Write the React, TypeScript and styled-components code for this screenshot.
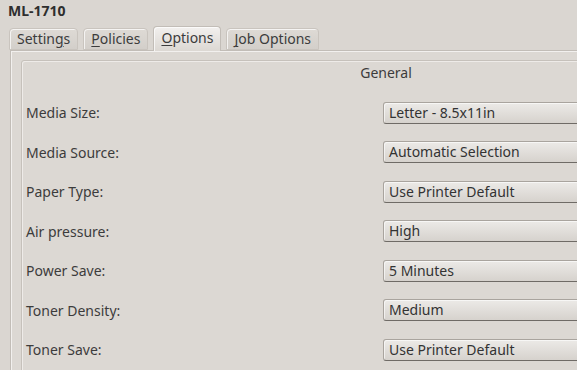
import styled, { createGlobalStyle } from "styled-components";

const GlobalStyle = createGlobalStyle`
  html, body {
    margin: 0;
    padding: 0;
    background: #dad6d1;
    overflow: hidden;
  }
  body {
    font-family: "Noto Sans", "DejaVu Sans", sans-serif;
    font-size: 14px;
    color: #3c3c3c;
  }
`;

const options = [
  { label: "Media Size:", value: "Letter - 8.5x11in" },
  { label: "Media Source:", value: "Automatic Selection" },
  { label: "Paper Type:", value: "Use Printer Default" },
  { label: "Air pressure:", value: "High" },
  { label: "Power Save:", value: "5 Minutes" },
  { label: "Toner Density:", value: "Medium" },
  { label: "Toner Save:", value: "Use Printer Default" },
];

export default function App() {
  return (
    <>
      <GlobalStyle />
      <Window>
        <Title>ML-1710</Title>
        <TabBar>
          <Tab>
            Settin<u>g</u>s
          </Tab>
          <Tab>
            <u>P</u>olicies
          </Tab>
          <Tab $active>
            <u>O</u>ptions
          </Tab>
          <Tab>
            <u>J</u>ob Options
          </Tab>
        </TabBar>
        <Panel>
          <Frame>
            <FrameTitle>General</FrameTitle>
            <Rows>
              {options.map((o) => (
                <Row key={o.label}>
                  <Label>{o.label}</Label>
                  <Combo>{o.value}</Combo>
                </Row>
              ))}
            </Rows>
          </Frame>
        </Panel>
      </Window>
    </>
  );
}

const Window = styled.div`
  width: 577px;
  height: 370px;
  overflow: hidden;
`;

const Title = styled.div`
  font-weight: bold;
  padding: 1px 8px 0;
  height: 25px;
  line-height: 20px;
  color: #2e2e2e;
`;

const TabBar = styled.div`
  display: flex;
  align-items: flex-end;
  gap: 5px;
  padding-left: 9px;
  height: 24px;
  position: relative;
  z-index: 1;
`;

const Tab = styled.div<{ $active?: boolean }>`
  height: ${(p) => (p.$active ? "25px" : "22px")};
  box-sizing: border-box;
  padding: 0 7px;
  line-height: ${(p) => (p.$active ? "22px" : "20px")};
  border: 1px solid ${(p) => (p.$active ? "#c2bdb7" : "#c9c4be")};
  border-bottom: ${(p) => (p.$active ? "none" : "1px solid #c9c4be")};
  border-radius: 4px 4px 0 0;
  background: ${(p) =>
    p.$active
      ? "linear-gradient(#f2f0ee, #dcd8d3)"
      : "linear-gradient(#dedad5, #d3cfca)"};
  box-shadow: inset 1px 1px 0 rgba(255, 255, 255, 0.7);
  color: #3c3c3c;
  margin-bottom: ${(p) => (p.$active ? "-1px" : "0")};

  u {
    text-decoration-thickness: 1px;
    text-underline-offset: 2px;
  }
`;

const Panel = styled.div`
  margin-left: 10px;
  width: 760px;
  height: 340px;
  border: 1px solid #c2bdb7;
  border-right: none;
  background: #dcd8d3;
  box-shadow: inset 1px 1px 0 #f2f0ee;
  padding: 9px 10px;
`;

const Frame = styled.div`
  width: 720px;
  height: 330px;
  border: 1px solid #c6c1bb;
  border-radius: 3px;
  box-shadow: inset 1px 1px 0 #eeebe8;
  padding: 0 4px;
`;

const FrameTitle = styled.div`
  text-align: center;
  height: 24px;
  line-height: 24px;
`;

const Rows = styled.div`
  display: flex;
  flex-direction: column;
  padding-top: 8px;
`;

const Row = styled.div`
  display: flex;
  align-items: center;
  height: 39.5px;
`;

const Label = styled.div`
  width: 357px;
`;

const Combo = styled.div`
  width: 240px;
  height: 22px;
  box-sizing: border-box;
  border: 1px solid #a9a49e;
  border-bottom-color: #6f6b66;
  border-radius: 3px;
  background: linear-gradient(#eceae7, #d6d2cd);
  box-shadow: inset 1px 1px 0 rgba(255, 255, 255, 0.6);
  padding: 0 5px;
  line-height: 20px;
  color: #333;
`;
